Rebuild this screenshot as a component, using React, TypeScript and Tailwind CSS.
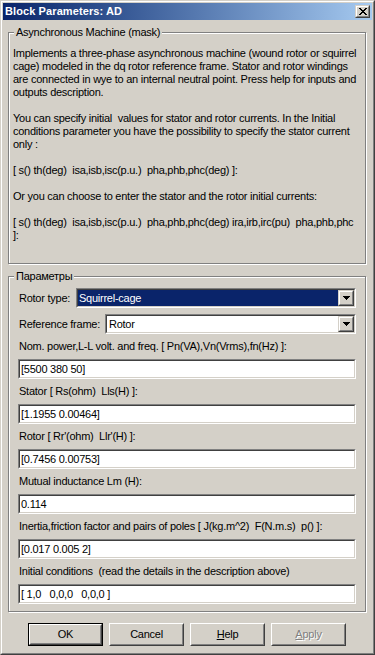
import React from 'react';

const description = [
  'Implements a three-phase asynchronous machine (wound rotor or squirrel',
  'cage) modeled in the dq rotor reference frame. Stator and rotor windings',
  'are connected in wye to an internal neutral point. Press help for inputs and',
  'outputs description.',
  '',
  'You can specify initial  values for stator and rotor currents. In the Initial',
  'conditions parameter you have the possibility to specify the stator current',
  'only :',
  '',
  '[ s() th(deg)  isa,isb,isc(p.u.)  pha,phb,phc(deg) ]:',
  '',
  'Or you can choose to enter the stator and the rotor initial currents:',
  '',
  '[ s() th(deg)  isa,isb,isc(p.u.)  pha,phb,phc(deg) ira,irb,irc(pu)  pha,phb,phc',
  ']:',
];

const fields = [
  { label: 'Nom. power,L-L volt. and freq. [ Pn(VA),Vn(Vrms),fn(Hz) ]:', value: '[5500 380 50]' },
  { label: 'Stator [ Rs(ohm)  Lls(H) ]:', value: '[1.1955 0.00464]' },
  { label: "Rotor [ Rr'(ohm)  Llr'(H) ]:", value: '[0.7456 0.00753]' },
  { label: 'Mutual inductance Lm (H):', value: '0.114' },
  { label: 'Inertia,friction factor and pairs of poles [ J(kg.m^2)  F(N.m.s)  p() ]:', value: '[0.017 0.005 2]' },
  { label: 'Initial conditions  (read the details in the description above)', value: '[ 1,0   0,0,0   0,0,0 ]' },
];

function Sunken({ className = '', innerClassName = '', children }: { className?: string; innerClassName?: string; children?: React.ReactNode }) {
  return (
    <div className={`border border-t-[#808080] border-l-[#808080] border-b-white border-r-white ${className}`}>
      <div className={`h-full border border-t-[#404040] border-l-[#404040] border-b-[#d4d0c8] border-r-[#d4d0c8] ${innerClassName}`}>
        {children}
      </div>
    </div>
  );
}

function Raised({ className = '', innerClassName = '', children }: { className?: string; innerClassName?: string; children?: React.ReactNode }) {
  return (
    <div className={`border border-t-[#d4d0c8] border-l-[#d4d0c8] border-b-[#404040] border-r-[#404040] bg-[#d4d0c8] ${className}`}>
      <div className={`h-full border border-t-white border-l-white border-b-[#808080] border-r-[#808080] ${innerClassName}`}>
        {children}
      </div>
    </div>
  );
}

function ArrowDown() {
  return (
    <svg width="7" height="4" viewBox="0 0 7 4" shapeRendering="crispEdges">
      <path d="M0 0h7v1H0z M1 1h5v1H1z M2 2h3v1H2z M3 3h1v1H3z" fill="#000" />
    </svg>
  );
}

function CloseGlyph() {
  return (
    <svg width="8" height="7" viewBox="0 0 8 7" shapeRendering="crispEdges">
      <path
        d="M0 0h2v1H0z M6 0h2v1H6z M1 1h2v1H1z M5 1h2v1H5z M2 2h4v1H2z M3 3h2v1H3z M2 4h4v1H2z M1 5h2v1H1z M5 5h2v1H5z M0 6h2v1H0z M6 6h2v1H6z"
        fill="#000"
      />
    </svg>
  );
}

function Dropdown({ value, selected, className = '' }: { value: string; selected?: boolean; className?: string }) {
  return (
    <Sunken className={`h-[20px] ${className}`} innerClassName="flex bg-white">
      <div className={`flex-1 flex items-center pl-[1px] ${selected ? 'bg-[#0a246a] text-white' : 'pl-[2px]'}`}>
        {value}
      </div>
      <Raised className="w-[16px] h-[16px]" innerClassName="flex items-center justify-center">
        <ArrowDown />
      </Raised>
    </Sunken>
  );
}

function GroupBox({ title, className = '', children }: { title: string; className?: string; children?: React.ReactNode }) {
  return (
    <div className={`relative ml-[5px] w-[358px] border border-[#808080] shadow-[inset_1px_1px_0_#fff,1px_1px_0_#fff] ${className}`}>
      <div className="absolute left-[5px] top-[-7px] px-[2px] bg-[#d4d0c8] leading-[13px] whitespace-pre">{title}</div>
      {children}
    </div>
  );
}

function Button({ label, hotkey, isDefault, disabled }: { label: string; hotkey?: boolean; isDefault?: boolean; disabled?: boolean }) {
  const text = hotkey ? (
    <span>
      <span className="underline underline-offset-1">{label[0]}</span>
      {label.slice(1)}
    </span>
  ) : (
    label
  );
  const face = (
    <div className="h-full border border-t-white border-l-white border-b-[#404040] border-r-[#404040]">
      <div
        className={`h-full flex items-center justify-center border border-t-[#d4d0c8] border-l-[#d4d0c8] border-b-[#808080] border-r-[#808080] ${
          disabled ? 'text-[#808080] [text-shadow:1px_1px_0_#fff]' : ''
        }`}
      >
        {text}
      </div>
    </div>
  );
  return (
    <div className={`w-[75px] h-[23px] bg-[#d4d0c8] ${isDefault ? 'border border-black' : ''}`}>{face}</div>
  );
}

export default function App() {
  return (
    <div className="w-[375px] h-[655px] font-['Liberation_Sans',Arial,sans-serif] text-[11px] text-black tracking-[-0.25px] border border-t-[#d4d0c8] border-l-[#d4d0c8] border-b-[#404040] border-r-[#404040] bg-[#d4d0c8]">
      <div className="h-full border border-t-white border-l-white border-b-[#808080] border-r-[#808080] p-[1px] flex flex-col">
        {/* title bar */}
        <div className="h-[17px] flex items-center justify-between bg-linear-to-r from-[#0a246a] to-[#a6caf0] pl-[2px] pr-[2px]">
          <span className="font-bold text-white tracking-[0.1px] leading-[13px]">Block Parameters: AD</span>
          <Raised className="w-[15px] h-[13px]" innerClassName="flex items-center justify-center">
            <CloseGlyph />
          </Raised>
        </div>

        <GroupBox title="Asynchronous Machine (mask)" className="mt-[12px] h-[232px]">
          <div className="pt-[14px] pl-[4px] leading-[13px]">
            {description.map((line, i) => (
              <div key={i} className="h-[13px] whitespace-pre">
                {line || '\u00a0'}
              </div>
            ))}
          </div>
        </GroupBox>

        <GroupBox title="Параметры" className="mt-[12px] h-[336px]">
          <div className="pt-[11px] px-[9px] leading-[13px]">
            <div className="flex items-center h-[20px]">
              <span className="w-[58px] pl-[1px] whitespace-pre">Rotor type:</span>
              <Dropdown value="Squirrel-cage" selected className="flex-1" />
            </div>
            <div className="flex items-center h-[20px] mt-[6px]">
              <span className="w-[87px] pl-[1px] whitespace-pre">Reference frame:</span>
              <Dropdown value="Rotor" className="flex-1" />
            </div>
            {fields.map((f) => (
              <div key={f.label}>
                <div className="mt-[6px] mb-[6px] h-[13px] pl-[1px] whitespace-pre">{f.label}</div>
                <Sunken className="h-[20px]" innerClassName="bg-white flex items-center pl-[1px] whitespace-pre">
                  {f.value}
                </Sunken>
              </div>
            ))}
          </div>
        </GroupBox>

        <div className="mt-[11px] flex gap-[6px] pl-[25px]">
          <Button label="OK" isDefault />
          <Button label="Cancel" />
          <Button label="Help" hotkey />
          <Button label="Apply" hotkey disabled />
        </div>
      </div>
    </div>
  );
}
